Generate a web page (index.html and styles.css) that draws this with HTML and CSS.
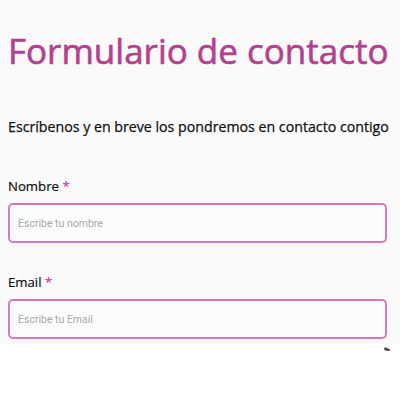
FILE: index.html
```html
<!DOCTYPE html>
<html lang="es">
<head>
<meta charset="utf-8">
<link rel="stylesheet" href="styles.css">
</head>
<body>
<div class="page">
  <h1 class="title">Formulario de contacto</h1>
  <p class="lead">Escríbenos y en breve los pondremos en contacto contigo</p>
  <form class="form">
    <div class="field">
      <label class="label">Nombre <span class="req">*</span></label>
      <input class="input" type="text" placeholder="Escribe tu nombre">
    </div>
    <div class="field">
      <label class="label">Email <span class="req">*</span></label>
      <input class="input" type="text" placeholder="Escribe tu Email">
    </div>
  </form>
</div>
<div class="below"><span class="cursor"></span></div>
</body>
</html>
```

FILE: styles.css
```css
html, body {
  margin: 0;
  padding: 0;
  background: #ffffff;
}
.page {
  height: 344px;
  background: #fafafa;
  padding: 0 13px 0 8px;
  box-sizing: border-box;
  font-family: "Open Sans", sans-serif;
}
.title {
  margin: 0;
  padding-top: 27px;
  font-size: 35px;
  font-weight: 400;
  line-height: 48px;
  color: #b4418e;
  -webkit-text-stroke: 0.6px #b4418e;
  white-space: nowrap;
}
.lead {
  margin: 0;
  padding-top: 42px;
  font-size: 14.2px;
  font-weight: 400;
  line-height: 20px;
  color: #111;
  -webkit-text-stroke: 0.25px #111;
  white-space: nowrap;
}
.form {
  display: flex;
  flex-direction: column;
  gap: 30px;
  padding-top: 40px;
}
.field {
  display: flex;
  flex-direction: column;
  gap: 8px;
}
.label {
  font-size: 13.2px;
  font-weight: 400;
  line-height: 18px;
  color: #111;
  -webkit-text-stroke: 0.2px #111;
}
.req {
  color: #c0449a;
  -webkit-text-stroke: 0.2px #c0449a;
}
.input {
  height: 40px;
  box-sizing: border-box;
  border: 2px solid #d878b8;
  border-radius: 5px;
  background: #fcfcfc;
  padding: 0 8px;
  font-family: Roboto, sans-serif;
  font-size: 10.5px;
  outline: none;
}
.input::placeholder {
  color: #a8a8a8;
}
.below {
  display: flex;
  justify-content: flex-end;
  padding: 4px 10px 0 0;
}
.cursor {
  display: block;
  width: 6px;
  height: 3px;
  background: #555;
  transform: rotate(25deg);
  border-radius: 1px;
}
```
